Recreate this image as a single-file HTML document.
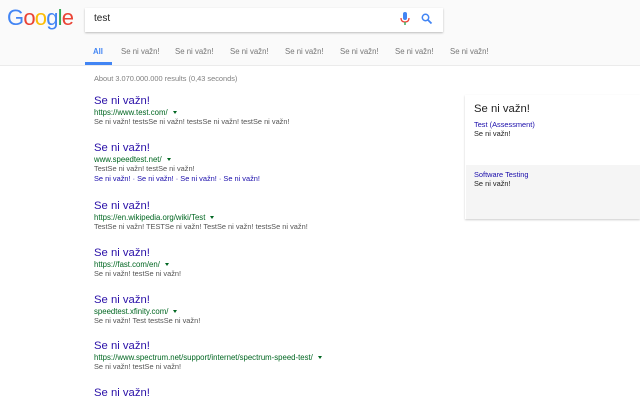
<html><head><style>
body{margin:0;width:640px;height:400px;overflow:hidden;background:#fff;font-family:"Liberation Sans",Arial,sans-serif;position:relative}
.a{position:absolute;white-space:nowrap}
.hd{position:absolute;left:0;top:0;width:640px;height:65px;background:#fafafa;border-bottom:1px solid #ebebeb}
.box{position:absolute;left:85px;top:8px;width:358px;height:24px;background:#fff;box-shadow:0 1px 2px rgba(0,0,0,.25)}
.tab{position:absolute;top:47px;font-size:7.8px;color:#777}
.t{font-size:11.3px;color:#2a10a8;line-height:14px}
.u{font-size:7.8px;color:#006621;line-height:9px}
.u:after{content:"";display:inline-block;margin-left:5px;border-left:2.5px solid transparent;border-right:2.5px solid transparent;border-top:3px solid #006621;vertical-align:1px}
.s{font-size:7.4px;color:#545454;line-height:9.5px}
.l{font-size:7.4px;color:#1a0dab;line-height:9.5px}
</style></head><body>
<div class="hd"></div>
<div class="a" style="left:7px;top:5px;font-size:22px;letter-spacing:-0.8px;"><span style="color:#4285f4">G</span><span style="color:#ea4335">o</span><span style="color:#fbbc05">o</span><span style="color:#4285f4">g</span><span style="color:#34a853">l</span><span style="color:#ea4335">e</span></div>
<div class="box"></div>
<div class="a" style="left:94px;top:13px;font-size:10px;color:#222">test</div>
<svg class="a" style="left:400px;top:12px" width="10" height="15"><rect x="3" y="0" width="4" height="8" rx="2" fill="#4285f4"/><path d="M1 6q0 4 4 4q4 0 4-4" stroke="#ea4335" stroke-width="1.3" fill="none"/><rect x="4.3" y="10" width="1.4" height="3" fill="#34a853"/></svg>
<svg class="a" style="left:421px;top:13px" width="12" height="12"><circle cx="4.5" cy="4.5" r="3.2" stroke="#4285f4" stroke-width="1.5" fill="none"/><path d="M7 7l3.5 3.5" stroke="#4285f4" stroke-width="1.8"/></svg>
<div class="tab" style="left:93px;font-weight:bold;color:#4285f4">All</div>
<div class="a" style="left:85px;top:62px;width:27px;height:3px;background:#4285f4"></div>
<div class="tab" style="left:121px">Se ni važn!</div>
<div class="tab" style="left:175px">Se ni važn!</div>
<div class="tab" style="left:230px">Se ni važn!</div>
<div class="tab" style="left:285px">Se ni važn!</div>
<div class="tab" style="left:340px">Se ni važn!</div>
<div class="tab" style="left:395px">Se ni važn!</div>
<div class="tab" style="left:450px">Se ni važn!</div>
<div class="a" style="left:94px;top:74px;font-size:7.4px;color:#808080">About 3.070.000.000 results (0,43 seconds)</div>

<div class="a" style="left:94px;top:94px"><div class="t">Se ni važn!</div><div class="u">https://www.test.com/</div><div class="s">Se ni važn! testsSe ni važn! testsSe ni važn! testSe ni važn!</div></div>
<div class="a" style="left:94px;top:141px"><div class="t">Se ni važn!</div><div class="u">www.speedtest.net/</div><div class="s">TestSe ni važn! testSe ni važn!</div><div class="l">Se ni važn! · Se ni važn! · Se ni važn! · Se ni važn!</div></div>
<div class="a" style="left:94px;top:199px"><div class="t">Se ni važn!</div><div class="u">https://en.wikipedia.org/wiki/Test</div><div class="s">TestSe ni važn! TESTSe ni važn! TestSe ni važn! testsSe ni važn!</div></div>
<div class="a" style="left:94px;top:246px"><div class="t">Se ni važn!</div><div class="u">https://fast.com/en/</div><div class="s">Se ni važn! testSe ni važn!</div></div>
<div class="a" style="left:94px;top:293px"><div class="t">Se ni važn!</div><div class="u">speedtest.xfinity.com/</div><div class="s">Se ni važn! Test testsSe ni važn!</div></div>
<div class="a" style="left:94px;top:339px"><div class="t">Se ni važn!</div><div class="u">https://www.spectrum.net/support/internet/spectrum-speed-test/</div><div class="s">Se ni važn! testSe ni važn!</div></div>
<div class="a" style="left:94px;top:386px"><div class="t">Se ni važn!</div></div>

<div class="a" style="left:465px;top:95px;width:175px;height:124px;background:#fff;box-shadow:0 1px 2px rgba(0,0,0,.2)"></div>
<div class="a" style="left:466px;top:165px;width:174px;height:54px;background:#f5f5f5"></div>
<div class="a" style="left:474px;top:103px;font-size:11.3px;color:#222">Se ni važn!</div>
<div class="a" style="left:474px;top:120px;font-size:7.4px;color:#1a0dab">Test (Assessment)</div>
<div class="a" style="left:474px;top:129px;font-size:7.4px;color:#222">Se ni važn!</div>
<div class="a" style="left:474px;top:170px;font-size:7.4px;color:#1a0dab">Software Testing</div>
<div class="a" style="left:474px;top:179px;font-size:7.4px;color:#222">Se ni važn!</div>
</body></html>
